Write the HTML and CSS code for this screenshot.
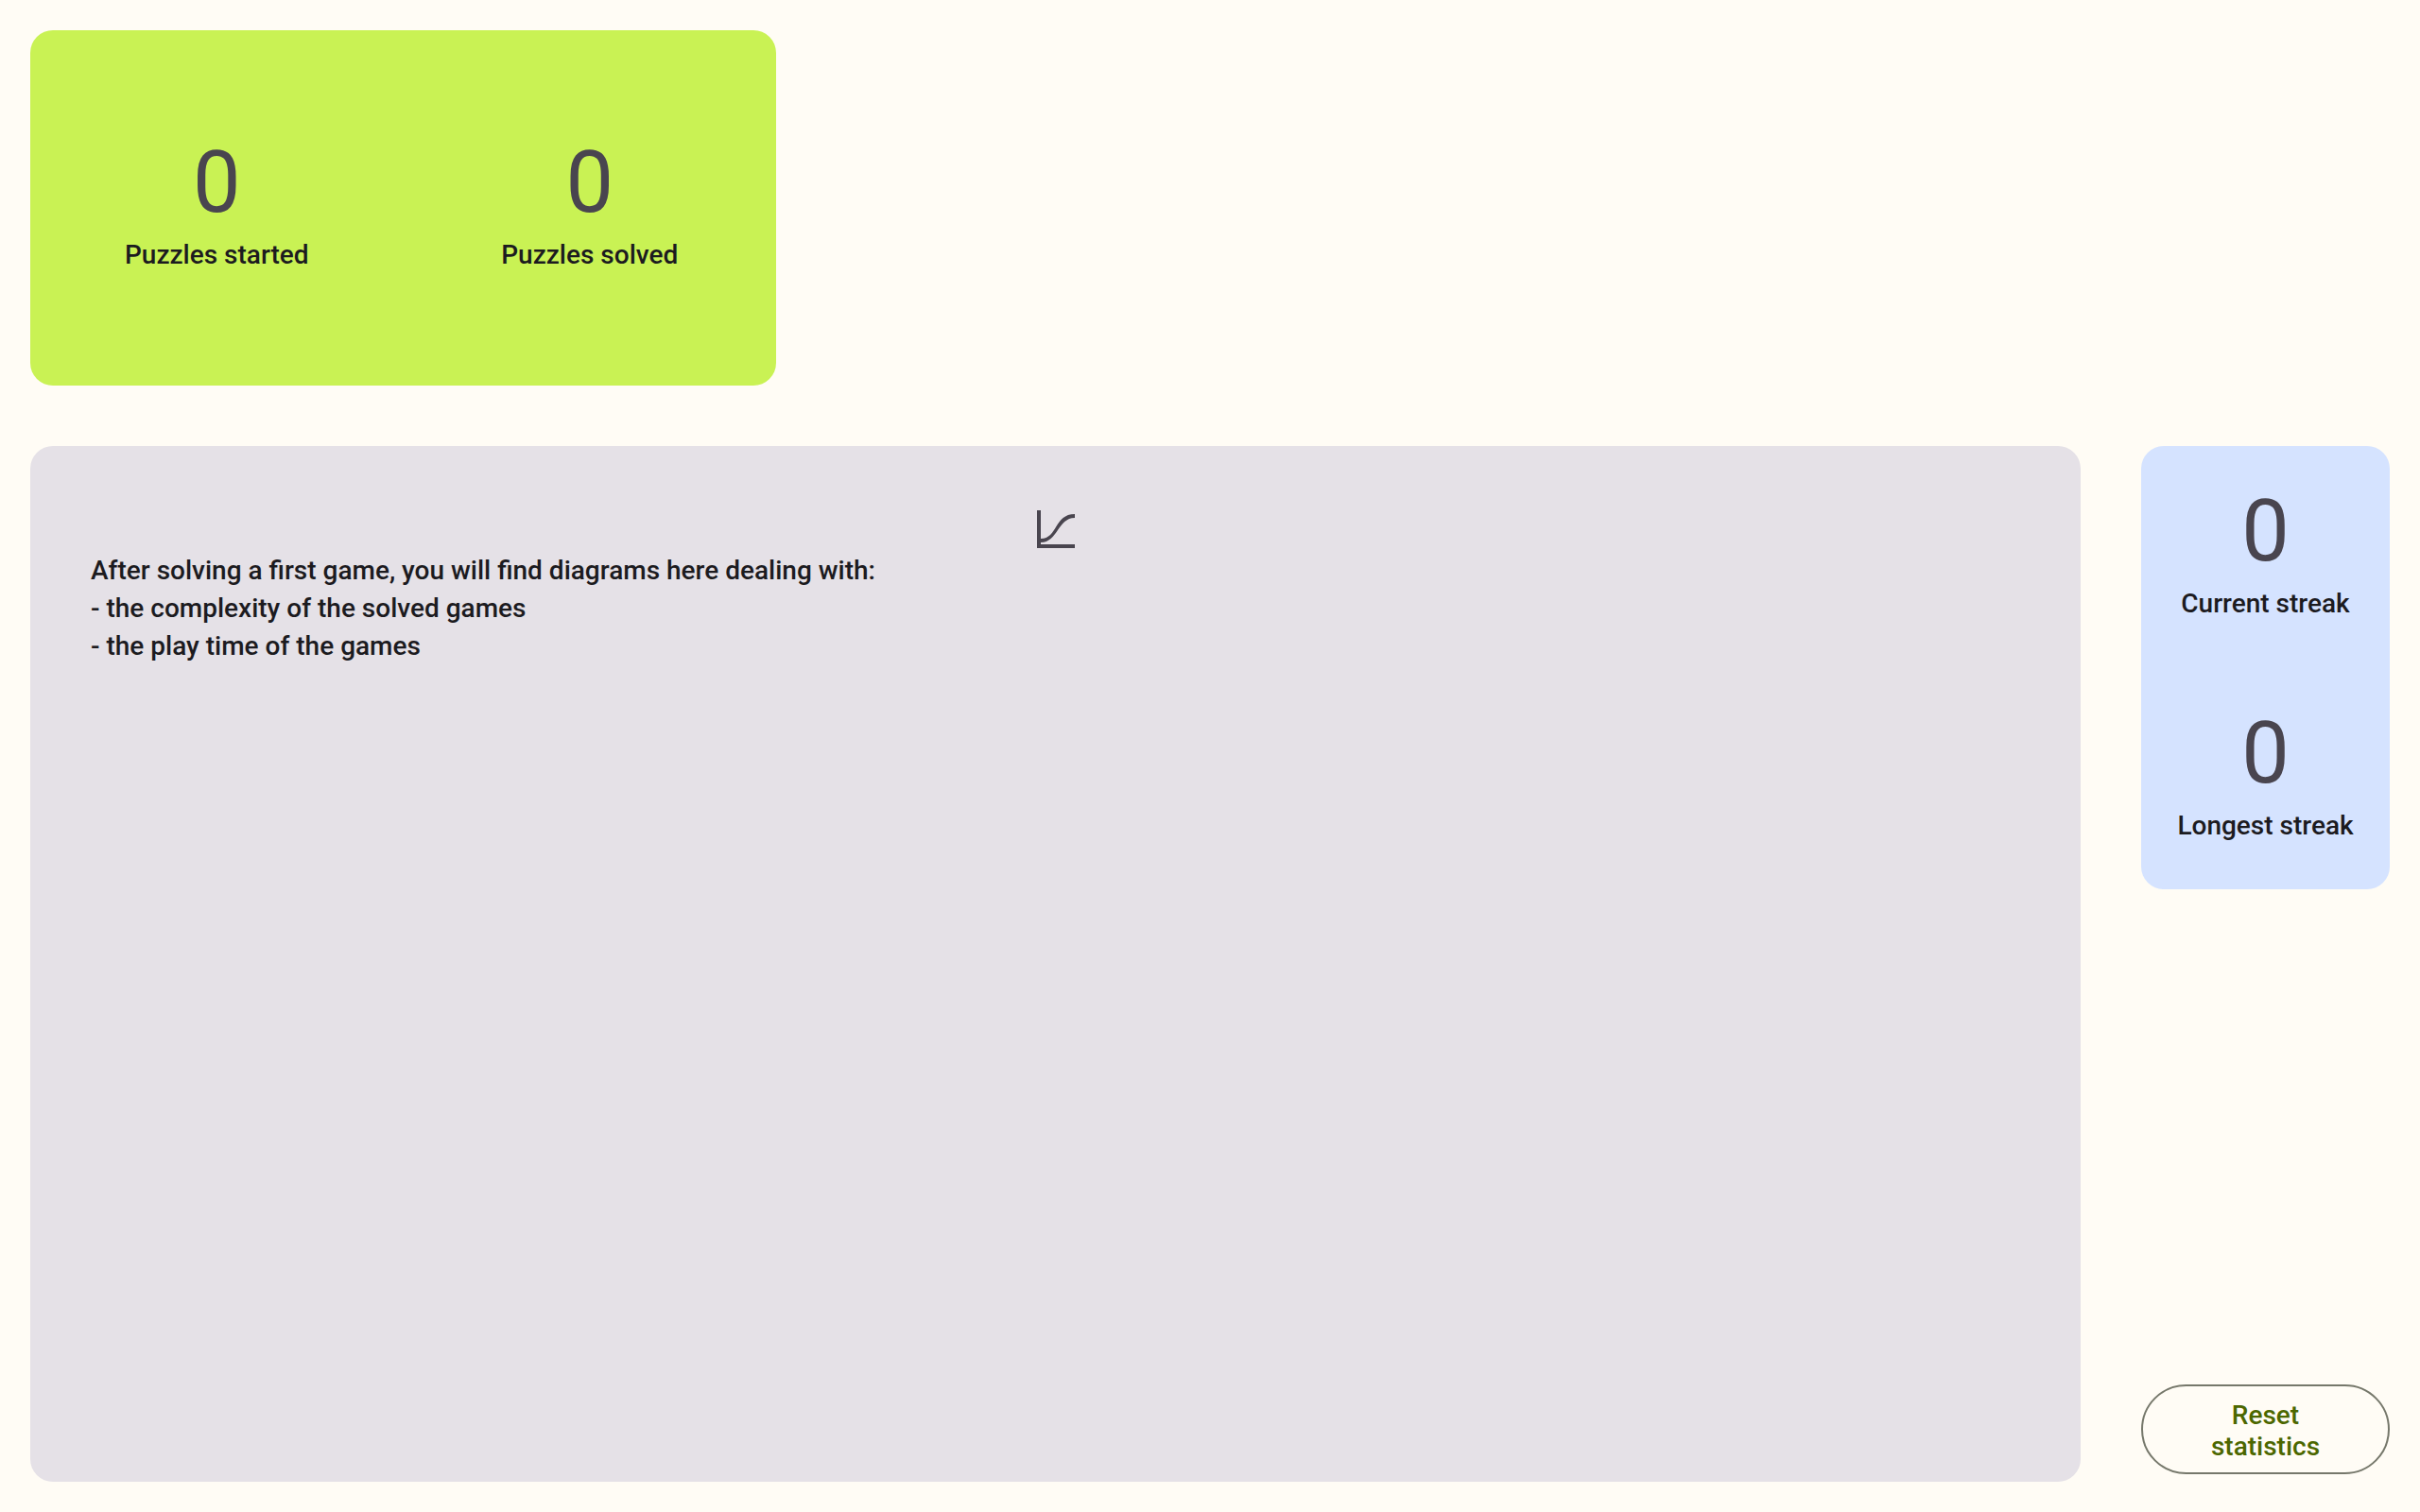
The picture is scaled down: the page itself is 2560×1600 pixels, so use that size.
FILE: index.html
```html
<!DOCTYPE html>
<html lang="en">
<head>
<meta charset="utf-8">
<title>Statistics</title>
<link rel="stylesheet" href="styles.css">
</head>
<body>
<main class="page">
  <section class="card totals">
    <div class="stat"><span class="value">0</span><span class="label">Puzzles started</span></div>
    <div class="stat"><span class="value">0</span><span class="label">Puzzles solved</span></div>
  </section>
  <div class="content">
    <section class="card diagrams">
      <svg class="chart-icon" viewBox="0 0 48 48" fill="currentColor" aria-hidden="true">
        <path d="M4 4H8V40H44V44H4Z"/>
        <path d="M8 34C26 34 22 8 44 8V12C26 12 26 38 8 38Z"/>
      </svg>
      <p class="hint">After solving a first game, you will find diagrams here dealing with:<br>- the complexity of the solved games<br>- the play time of the games</p>
    </section>
    <aside class="side">
      <section class="card streaks">
        <div class="stat"><span class="value">0</span><span class="label">Current streak</span></div>
        <div class="stat"><span class="value">0</span><span class="label">Longest streak</span></div>
      </section>
      <button class="reset" type="button">Reset statistics</button>
    </aside>
  </div>
</main>
</body>
</html>
```
FILE: styles.css
```css
* { box-sizing: border-box; }
body {
  margin: 0;
  background: #fffcf5;
  color: #1c1b1f;
  font-family: Roboto, "Liberation Sans", sans-serif;
  font-size: 28px;
  font-weight: 500;
}
.page {
  display: flex;
  flex-direction: column;
  gap: 64px;
  min-height: 100vh;
  padding: 32px;
}
.card { border-radius: 24px; }
.stat {
  display: flex;
  flex-direction: column;
  align-items: center;
  padding-bottom: 4px;
}
.value {
  color: #49454f;
  font-size: 90px;
  font-weight: 400;
  line-height: 104px;
}
.label { line-height: 48px; }
.totals {
  display: grid;
  grid-template-columns: 1fr 1fr;
  align-content: center;
  width: 789px;
  min-height: 376px;
  background: #c9f254;
}
.content {
  display: flex;
  flex: 1;
  gap: 64px;
}
.diagrams {
  flex: 1;
  padding: 64px;
  background: #e5e1e7;
}
.chart-icon {
  display: block;
  width: 48px;
  height: 48px;
  margin: 0 auto;
  color: #49454f;
}
.hint {
  margin: 0;
  line-height: 40px;
}
.side {
  display: flex;
  flex-direction: column;
  justify-content: space-between;
  width: 263px;
  padding-bottom: 8px;
}
.streaks {
  display: flex;
  flex-direction: column;
  gap: 79px;
  padding: 39px 0;
  background: #d5e3ff;
}
.reset {
  height: 95px;
  padding: 2px 48px 0;
  border: 2px solid #76786b;
  border-radius: 48px;
  background: transparent;
  color: #4c6700;
  font: inherit;
  line-height: 33px;
}
```
